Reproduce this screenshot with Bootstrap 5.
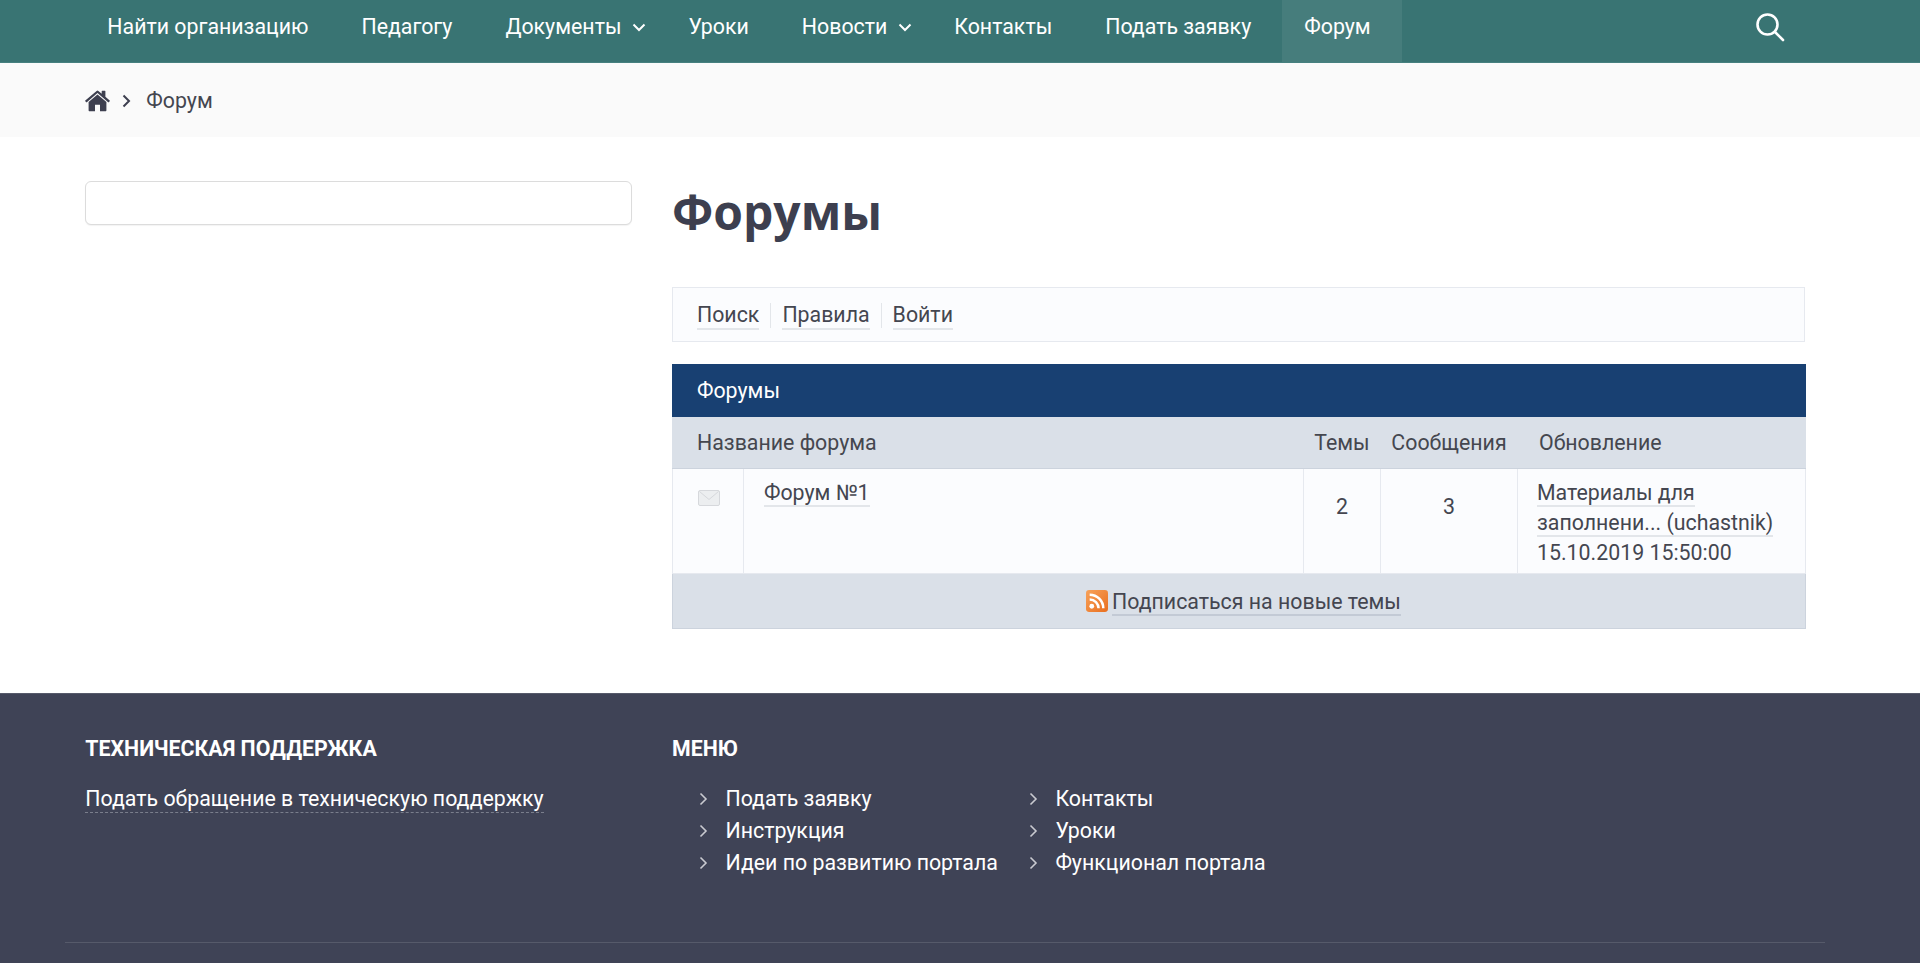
<!DOCTYPE html>
<html lang="ru">
<head>
  <meta charset="UTF-8" />
  <meta name="viewport" content="width=device-width, initial-scale=1.0" />
  <title>Форум</title>

  <link href="https://cdn.jsdelivr.net/npm/bootstrap@5.3.2/dist/css/bootstrap.min.css" rel="stylesheet">
  <style>
    html, body { height: 963px; overflow: hidden; }
    body { font-family: Roboto, "Liberation Sans", sans-serif; font-size: 21.33px; line-height: 30px; color: #444650; background: #fff; }
    .site-wrap { max-width: 1760px; padding-left: 20px; padding-right: 20px; margin-left: 65.33px; margin-right: 0; }
    .site-grid { --bs-gutter-x: 40px; }

    .top-bar { --bs-navbar-nav-link-padding-x: 22px; background: #397473; border-bottom: 1px solid #46807f; height: 63px; padding: 0; align-items: flex-start; }
    .top-bar .navbar-nav { gap: 9px; height: 62px; }
    .top-bar .navbar-nav .nav-link { color: #fff; height: 62px; display: flex; align-items: center; padding-top: 0; padding-bottom: 8px; }
    .top-bar .navbar-nav .nav-link.active { color: #fff; background: #467d7c; padding-right: 31px; }
    .top-bar .navbar-nav .nav-link.has-caret { padding-right: 11px; }
    .top-bar .dropdown-toggle::after { display: none; }
    .top-bar .caret-ico { width: 14px; height: 9px; margin-left: 11px; }
    .search-link { align-self: flex-start; margin-top: 12px; }
    .search-ico { width: 30px; height: 30px; margin-right: 20px; }

    .crumb-band { background: #fafafa; height: 74px; }
    .crumb-band .breadcrumb { --bs-breadcrumb-margin-bottom: 0; --bs-breadcrumb-divider: ''; height: 74px; padding-top: 2px; align-items: center; }
    .crumb-band .breadcrumb-item + .breadcrumb-item { padding-left: 15px; }
    .crumb-band .breadcrumb-item + .breadcrumb-item::before { display: none; }
    .crumb-band .breadcrumb-item.active { color: #444650; }
    .home-ico { width: 25px; height: 22px; display: block; }
    .crumb-sep { width: 9px; height: 14px; display: block; margin-left: 12px; }

    .page-body { padding-top: 44px; height: 556px; }
    .search-input { height: 44px; border: 1px solid #dcdcdc; border-radius: 6px; box-shadow: 0 1px 1px rgba(0,0,0,.05); }
    .page-title { font-family: "Open Sans", Roboto, sans-serif; font-size: 48px; font-weight: 700; line-height: 62px; margin: 0 0 44px; color: #3d3f4f; }

    .forum-tools { background: #fbfcfe; border: 1px solid #e6e9ef; height: 55px; padding: 1px 24px 0; margin-bottom: 22px; }
    .forum-tools a { border-bottom: 2px solid #e3e6ea; line-height: 27px; }
    .forum-tools .tool-sep { width: 1px; height: 25px; background: #e3e6ea; margin: 0 11px; }
    .forum-link { color: #444650; text-decoration: none; border-bottom: 2px solid #e3e6ea; }

    .forum-table { width: 1134px; table-layout: fixed; margin: 0; border-collapse: collapse; color: #444650; }
    .table.forum-table > * > * > * { padding: 0; border: 1px solid #e6e9ef; background: #fbfcfe; color: inherit; box-shadow: none; }
    .table.forum-table .caption-row th { background: #184072; border-color: #184072; color: #fff; font-weight: 400; height: 52px; padding-left: 24px; vertical-align: middle; }
    .table.forum-table .head-row th { background: #dae0e8; border-color: #dae0e8; border-bottom-color: #ccd3dd; font-weight: 400; height: 52px; color: #45474f; vertical-align: middle; }
    .table.forum-table .data-row td { height: 105px; vertical-align: top; padding-top: 9px; }
    .table.forum-table .data-row .num-cell { padding-top: 23px; text-align: center; }
    .table.forum-table .foot-row td { background: #dae0e8; border-color: #ccd3dd; height: 55px; padding-left: 9px; padding-top: 2px; text-align: center; vertical-align: middle; }
    .mail-ico { width: 22px; height: 16px; display: block; margin: 12px 0 0 25px; }
    .rss-ico { width: 22px; height: 22px; vertical-align: -3px; margin-right: 4px; }
    .foot-row .forum-link { border-bottom-color: #c3cad5; }

    .site-footer { background: #3f4356; color: #fff; height: 270px; padding-top: 40px; border-top: 1px solid #565a6a; }
    .foot-title { font-size: 21.33px; font-weight: 700; line-height: 30px; text-transform: uppercase; margin: 0 0 20px; }
    .foot-link { color: #fff; text-decoration: none; border-bottom: 1px dashed #7a7e8c; padding-bottom: 1px; }
    .foot-list { list-style: none; margin: 0 4px 0 0; padding: 0 0 0 53.5px; }
    .foot-list li { position: relative; height: 32px; line-height: 30px; }
    .foot-list a { color: #fff; text-decoration: none; }
    .foot-list svg { position: absolute; left: -26px; top: 8px; width: 9px; height: 14px; }
    .foot-line { border-top: 1px solid #565a6a; margin: 62px -20px 0; opacity: 1; }
  </style>
</head>
<body>

  <nav class="navbar navbar-expand top-bar">
    <div class="container site-wrap">
      <ul class="navbar-nav">
        <li class="nav-item"><a class="nav-link" href="#">Найти организацию</a></li>
        <li class="nav-item"><a class="nav-link" href="#">Педагогу</a></li>
        <li class="nav-item dropdown">
          <a class="nav-link has-caret dropdown-toggle" href="#" data-bs-toggle="dropdown">Документы
            <svg class="caret-ico" viewBox="0 0 14 9" fill="none" stroke="#fff" stroke-width="2"><path d="M1.5 1.5 7 7l5.5-5.5"/></svg>
          </a>
        </li>
        <li class="nav-item"><a class="nav-link" href="#">Уроки</a></li>
        <li class="nav-item dropdown">
          <a class="nav-link has-caret dropdown-toggle" href="#" data-bs-toggle="dropdown">Новости
            <svg class="caret-ico" viewBox="0 0 14 9" fill="none" stroke="#fff" stroke-width="2"><path d="M1.5 1.5 7 7l5.5-5.5"/></svg>
          </a>
        </li>
        <li class="nav-item"><a class="nav-link" href="#">Контакты</a></li>
        <li class="nav-item"><a class="nav-link" href="#">Подать заявку</a></li>
        <li class="nav-item"><a class="nav-link active" href="#">Форум</a></li>
      </ul>
      <a href="#" class="search-link ms-auto d-block">
        <svg class="search-ico d-block" viewBox="0 0 30 30" fill="none" stroke="#fff" stroke-width="2.6" stroke-linecap="round"><circle cx="12.5" cy="12.5" r="10"/><path d="m20 20 8 8"/></svg>
      </a>
    </div>
  </nav>

  <div class="crumb-band">
    <div class="container site-wrap">
      <ol class="breadcrumb">
        <li class="breadcrumb-item d-flex align-items-center">
          <a href="#" class="d-block">
            <svg class="home-ico" viewBox="0 0 25 22" fill="#3d3f4f"><path d="M12.5 4.6 3.6 12v8.2c0 .6.4 1 1 1H10v-6.4h5v6.4h5.4c.6 0 1-.4 1-1V12z"/><path d="M24.7 10.4 20.4 6.800V1.300c0-.3-.2-.5-.5-.5h-2.700c-.3 0-.5.2-.5.5v2.400L13.400.900a1.400 1.400 0 0 0-1.800 0L.3 10.400c-.2.200-.3.500-.1.700l.9 1.100c.2.200.5.200.7.100L12.500 2.900l10.700 9.400c.2.100.5.100.7-.1l.9-1.100c.2-.2.100-.5-.1-.7z"/></svg>
          </a>
          <svg class="crumb-sep" viewBox="0 0 9 14" fill="none" stroke="#3d3f4f" stroke-width="2"><path d="m1.500 1.500 5.500 5.500-5.500 5.500"/></svg>
        </li>
        <li class="breadcrumb-item active">Форум</li>
      </ol>
    </div>
  </div>

  <div class="page-body">
    <div class="container site-wrap">
      <div class="row site-grid">
        <div class="col-4">
          <input type="text" class="form-control search-input">
        </div>
        <div class="col-8">
          <h1 class="page-title">Форумы</h1>

          <div class="forum-tools d-flex align-items-center">
            <a href="#" class="forum-link">Поиск</a>
            <span class="tool-sep"></span>
            <a href="#" class="forum-link">Правила</a>
            <span class="tool-sep"></span>
            <a href="#" class="forum-link">Войти</a>
          </div>

          <table class="table forum-table">
            <colgroup>
              <col style="width: 71px">
              <col style="width: 560px">
              <col style="width: 77px">
              <col style="width: 137px">
              <col>
            </colgroup>
            <thead>
              <tr class="caption-row"><th colspan="5">Форумы</th></tr>
              <tr class="head-row">
                <th colspan="2" class="ps-4">Название форума</th>
                <th class="text-center">Темы</th>
                <th class="text-center">Сообщения</th>
                <th style="padding-left: 21px">Обновление</th>
              </tr>
            </thead>
            <tbody>
              <tr class="data-row">
                <td>
                  <svg class="mail-ico" viewBox="0 0 22 16" fill="#eceef0" stroke="#d6d8dc"><rect x=".5" y=".5" width="21" height="15" rx="1.500"/><path d="m1.500 1.500 9.500 8 9.500-8" fill="none"/></svg>
                </td>
                <td style="padding-left: 20px"><a href="#" class="forum-link">Форум №1</a></td>
                <td class="num-cell">2</td>
                <td class="num-cell">3</td>
                <td style="padding-left: 19px">
                  <a href="#" class="forum-link">Материалы для</a><br>
                  <a href="#" class="forum-link">заполнени... (uchastnik)</a><br>
                  15.10.2019 15:50:00
                </td>
              </tr>
            </tbody>
            <tfoot>
              <tr class="foot-row">
                <td colspan="5">
                  <svg class="rss-ico" viewBox="0 0 21 21"><defs><linearGradient id="rssFill" x1="0" y1="0" x2="1" y2="1"><stop offset="0" stop-color="#f7a25a"/><stop offset="1" stop-color="#e96f1f"/></linearGradient></defs><rect width="21" height="21" rx="3" fill="url(#rssFill)"/><circle cx="5.500" cy="15.500" r="2.300" fill="#fff"/><path d="M3.500 9a8.500 8.500 0 0 1 8.500 8.500M3.500 4.500a13 13 0 0 1 13 13" fill="none" stroke="#fff" stroke-width="2.400"/></svg><a href="#" class="forum-link">Подписаться на новые темы</a>
                </td>
              </tr>
            </tfoot>
          </table>
        </div>
      </div>
    </div>
  </div>

  <footer class="site-footer">
    <div class="container site-wrap">
      <div class="row site-grid">
        <div class="col-4">
          <h5 class="foot-title">Техническая поддержка</h5>
          <a href="#" class="foot-link">Подать обращение в техническую поддержку</a>
        </div>
        <div class="col-8">
          <h5 class="foot-title">Меню</h5>
          <div class="d-flex">
            <ul class="foot-list">
              <li><svg viewBox="0 0 9 14" fill="none" stroke="#c9cad0" stroke-width="1.600"><path d="m1.500 1.500 5.500 5.500-5.500 5.500"/></svg><a href="#">Подать заявку</a></li>
              <li><svg viewBox="0 0 9 14" fill="none" stroke="#c9cad0" stroke-width="1.600"><path d="m1.500 1.500 5.500 5.500-5.500 5.500"/></svg><a href="#">Инструкция</a></li>
              <li><svg viewBox="0 0 9 14" fill="none" stroke="#c9cad0" stroke-width="1.600"><path d="m1.500 1.500 5.500 5.500-5.500 5.500"/></svg><a href="#">Идеи по развитию портала</a></li>
            </ul>
            <ul class="foot-list">
              <li><svg viewBox="0 0 9 14" fill="none" stroke="#c9cad0" stroke-width="1.600"><path d="m1.500 1.500 5.500 5.500-5.500 5.500"/></svg><a href="#">Контакты</a></li>
              <li><svg viewBox="0 0 9 14" fill="none" stroke="#c9cad0" stroke-width="1.600"><path d="m1.500 1.500 5.500 5.500-5.500 5.500"/></svg><a href="#">Уроки</a></li>
              <li><svg viewBox="0 0 9 14" fill="none" stroke="#c9cad0" stroke-width="1.600"><path d="m1.500 1.500 5.500 5.500-5.500 5.500"/></svg><a href="#">Функционал портала</a></li>
            </ul>
          </div>
        </div>
      </div>
      <hr class="foot-line">
    </div>
  </footer>

  <script src="https://cdn.jsdelivr.net/npm/bootstrap@5.3.2/dist/js/bootstrap.bundle.min.js"></script>
</body>
</html>
